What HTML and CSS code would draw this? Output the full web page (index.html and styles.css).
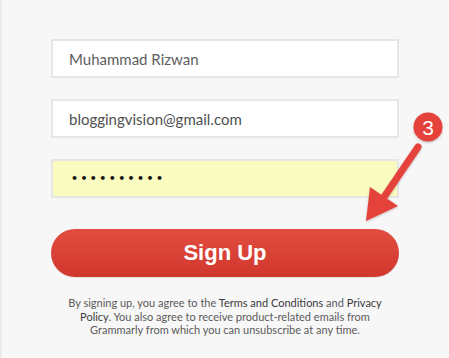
FILE: index.html
```html
<!DOCTYPE html>
<html>
<head>
<meta charset="utf-8">
<link rel="stylesheet" href="styles.css">
</head>
<body>
<div class="page">
  <form class="form">
    <input class="field" type="text" value="Muhammad Rizwan" readonly>
    <input class="field field-email" type="text" value="bloggingvision@gmail.com" readonly>
    <div class="field field-pass">••••••••••</div>
    <button type="button" class="btn">Sign Up</button>
    <p class="legal">By signing up, you agree to the <span class="strong">Terms and Conditions</span> and <span class="strong">Privacy Policy</span>. You also agree to receive product-related emails from Grammarly from which you can unsubscribe at any time.</p>
  </form>
  <svg class="annot" width="449" height="358" viewBox="0 0 449 358">
    <defs>
      <filter id="sh" x="-30%" y="-30%" width="160%" height="160%">
        <feDropShadow dx="0" dy="1" stdDeviation="1" flood-color="#000" flood-opacity="0.25"/>
      </filter>
    </defs>
    <g filter="url(#sh)" fill="#e5433b">
      <line x1="418" y1="147" x2="382" y2="200" stroke="#e5433b" stroke-width="7" stroke-linecap="round"/>
      <polygon points="366,221 370,187 398,206"/>
      <circle cx="428" cy="127" r="14.5"/>
    </g>
    <text x="428" y="135" text-anchor="middle" class="num">3</text>
  </svg>
</div>
</body>
</html>
```
FILE: styles.css
```css
html, body {
  margin: 0;
  padding: 0;
}
body {
  background: #f7f7f7;
  font-family: Lato, "Open Sans", sans-serif;
}
.page {
  position: relative;
  width: 449px;
  height: 358px;
  border-left: 2px solid #ebebeb;
  box-sizing: border-box;
  overflow: hidden;
}
.form {
  display: flex;
  flex-direction: column;
  width: 348px;
  margin: 0 0 0 49px;
  padding-top: 39px;
}
.field {
  box-sizing: border-box;
  height: 39px;
  border: 2px solid #e6e6e6;
  background: #fff;
  padding: 0 0 0 16px;
  margin: 0 0 21px 0;
  font-family: Lato, sans-serif;
  font-size: 15px;
  color: #5e5e5e;
  outline: none;
  width: 100%;
  display: block;
}
.field-email {
  color: #505050;
}
.field-pass {
  background: #fafcbf;
  display: flex;
  align-items: center;
  color: #111;
  padding-left: 18px;
  margin-bottom: 31px;
  font-family: "DejaVu Sans", sans-serif;
  font-size: 11px;
  letter-spacing: 2.4px;
  font-weight: bold;
}
.btn {
  height: 48px;
  border: 0;
  border-radius: 24px;
  background: linear-gradient(#e24c41, #d1382d);
  color: #fff;
  font-family: "Liberation Sans", Arial, sans-serif;
  font-weight: bold;
  font-size: 22px;
  padding: 0;
  margin: 0;
  width: 100%;
  box-shadow: 0 1px 1px rgba(0,0,0,0.08);
}
.legal {
  margin: 19px 0 0 0;
  text-align: center;
  font-size: 11px;
  line-height: 13.5px;
  color: #5a5a5a;
  padding: 0 6px;
}
.strong {
  color: #3a3a3a;
}
.annot {
  position: absolute;
  left: -2px;
  top: 0;
}
.num {
  font-family: "Liberation Sans", Arial, sans-serif;
  font-size: 21px;
  fill: #fff;
}
```
